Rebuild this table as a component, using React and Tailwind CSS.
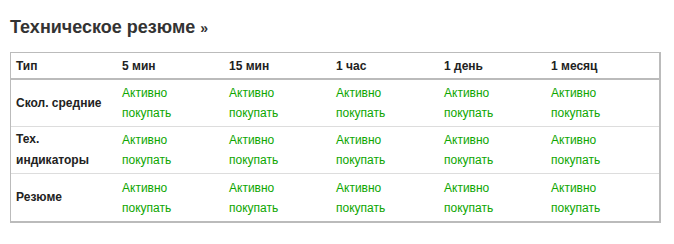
const periods = ['5 мин', '15 мин', '1 час', '1 день', '1 месяц'];

const rows = [
  {label: ['Скол. средние']},
  {label: ['Тех.', 'индикаторы']},
  {label: ['Резюме']},
];

const cols = 'grid grid-cols-[106px_107px_107px_108px_107px_1fr]';

export default function App() {
  return (
    <div className="min-h-[244px] bg-white pl-[10px] pr-[13px] font-['Liberation_Sans',Arial,sans-serif] text-[#333]">
      <h2 className="pt-[18px] text-[18px] font-bold leading-[18px] text-[#333]">
        Техническое резюме <span className="text-[14px]">»</span>
      </h2>
      <div className="mt-[15px] border-t border-l border-r-2 border-b-2 border-[#bbb] text-[12px]">
        <div className={`${cols} h-[27px] items-center border-b-2 border-[#bbb] font-bold text-[#222]`}>
          <div className="pl-[5px]">Тип</div>
          {periods.map(p => (
            <div key={p} className="pl-[5px]">
              {p}
            </div>
          ))}
        </div>
        {rows.map((r, i) => (
          <div
            key={i}
            className={`${cols} h-[47px] items-center ${i < rows.length - 1 ? 'border-b border-[#ddd]' : ''}`}
          >
            <div className="pl-[5px] font-bold leading-[21px] text-[#222]">
              {r.label.map(l => (
                <div key={l}>{l}</div>
              ))}
            </div>
            {periods.map(p => (
              <div key={p} className="pl-[5px] leading-[20px] text-[#0ea600]">
                <div>Активно</div>
                <div>покупать</div>
              </div>
            ))}
          </div>
        ))}
      </div>
    </div>
  );
}
